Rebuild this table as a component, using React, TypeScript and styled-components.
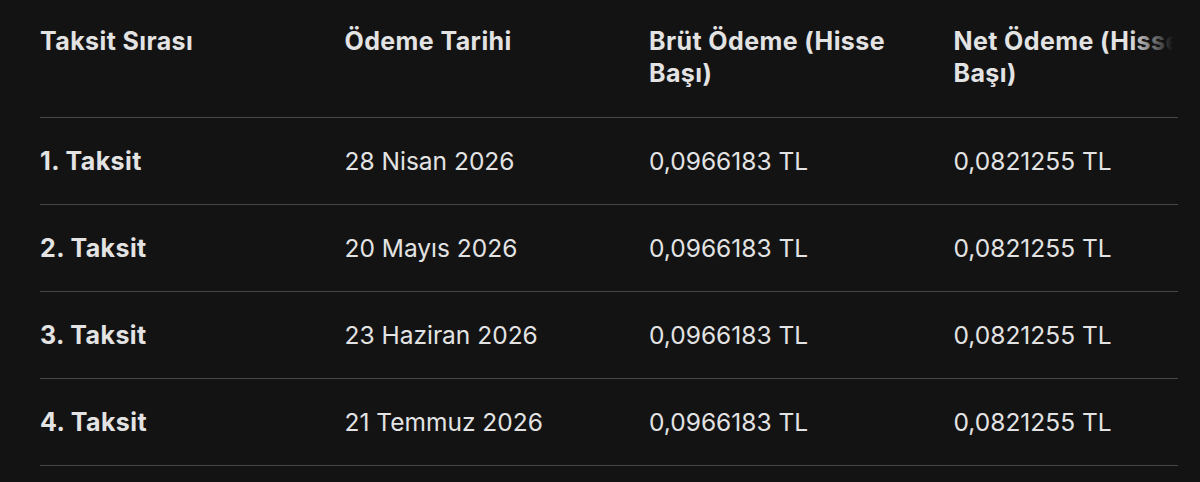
import styled, { createGlobalStyle } from 'styled-components'

const GlobalStyle = createGlobalStyle`
    html, body {
        margin: 0;
        padding: 0;
        background: #131314;
    }
    body {
        font-family: Inter, "Noto Sans", "Liberation Sans", sans-serif;
        color: #e3e3e3;
    }
`

const Page = styled.div`
    padding: 25px 22px 0 40px;
    height: 482px;
    box-sizing: border-box;
    overflow: hidden;
`

const Scroller = styled.div`
    position: relative;
    overflow: hidden;
`

// right edge fade over the clipped header text
const Fade = styled.div`
    position: absolute;
    top: 0;
    right: 0;
    width: 48px;
    height: 88px;
    background: linear-gradient(to right, rgba(19, 19, 20, 0), #131314 90%);
    pointer-events: none;
`

const Table = styled.table`
    border-collapse: collapse;
    table-layout: fixed;
    width: 1218px;
    font-size: 24.5px;
    line-height: 32px;
    letter-spacing: -0.2px;
`

const Col = styled.col`
    width: 304.5px;
`

const HeadCell = styled.th`
    text-align: left;
    font-weight: 700;
    font-size: 25px;
    letter-spacing: 0.4px;
    vertical-align: top;
    padding: 0 24px 28px 0;
    border-bottom: 1px solid #444746;
`

const Cell = styled.td<{ $bold?: boolean }>`
    padding: 27px 24px 27px 0;
    font-weight: ${p => (p.$bold ? 700 : 400)};
    font-size: ${p => (p.$bold ? '25px' : '24.5px')};
    letter-spacing: ${p => (p.$bold ? '0.4px' : '0px')};
    border-bottom: 1px solid #444746;
    white-space: nowrap;
`

const rows = [
    { no: '1. Taksit', date: '28 Nisan 2026' },
    { no: '2. Taksit', date: '20 Mayıs 2026' },
    { no: '3. Taksit', date: '23 Haziran 2026' },
    { no: '4. Taksit', date: '21 Temmuz 2026' },
]

export default function App() {
    return (
        <>
            <GlobalStyle />
            <Page>
                <Scroller>
                    <Table>
                        <colgroup>
                            <Col />
                            <Col />
                            <Col />
                            <Col />
                        </colgroup>
                        <thead>
                            <tr>
                                <HeadCell>Taksit Sırası</HeadCell>
                                <HeadCell>Ödeme Tarihi</HeadCell>
                                <HeadCell>Brüt Ödeme (Hisse Başı)</HeadCell>
                                <HeadCell>Net Ödeme (Hisse Başı)</HeadCell>
                            </tr>
                        </thead>
                        <tbody>
                            {rows.map(r => (
                                <tr key={r.no}>
                                    <Cell $bold>{r.no}</Cell>
                                    <Cell>{r.date}</Cell>
                                    <Cell>0,0966183 TL</Cell>
                                    <Cell>0,0821255 TL</Cell>
                                </tr>
                            ))}
                        </tbody>
                    </Table>
                    <Fade />
                </Scroller>
            </Page>
        </>
    )
}
